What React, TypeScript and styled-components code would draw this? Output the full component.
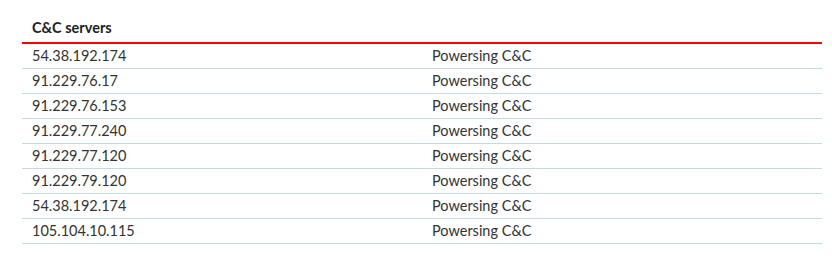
import styled, { createGlobalStyle } from "styled-components";

const GlobalStyle = createGlobalStyle`
	body {
		margin: 0;
		background: #ffffff;
		font-family: Lato, "Liberation Sans", sans-serif;
		color: #333333;
	}
`;

const servers = [
	"54.38.192.174",
	"91.229.76.17",
	"91.229.76.153",
	"91.229.77.240",
	"91.229.77.120",
	"91.229.79.120",
	"54.38.192.174",
	"105.104.10.115",
];

export default function App() {
	return (
		<Page>
			<GlobalStyle />
			<Table>
				<thead>
					<tr>
						<HeadCell>C&amp;C servers</HeadCell>
						<HeadCell />
					</tr>
				</thead>
				<tbody>
					{servers.map((ip, i) => (
						<tr key={i}>
							<Cell>{ip}</Cell>
							<Cell>Powersing C&amp;C</Cell>
						</tr>
					))}
				</tbody>
			</Table>
		</Page>
	);
}

const Page = styled.div`
	padding: 15px 10px 0 22px;
`;

const Table = styled.table`
	width: 800px;
	border-collapse: collapse;
	table-layout: fixed;
	font-size: 14.5px;
`;

const HeadCell = styled.th`
	text-align: left;
	font-weight: 700;
	padding: 5px 10px 6px;
	height: 16px;
	line-height: 16px;
	border-bottom: 2px solid #ff0000;
	color: #222222;
`;

const Cell = styled.td`
	padding: 0 10px;
	height: 24px;
	line-height: 16px;
	border-bottom: 1px solid #c2dbe1;
	color: #333333;
`;
